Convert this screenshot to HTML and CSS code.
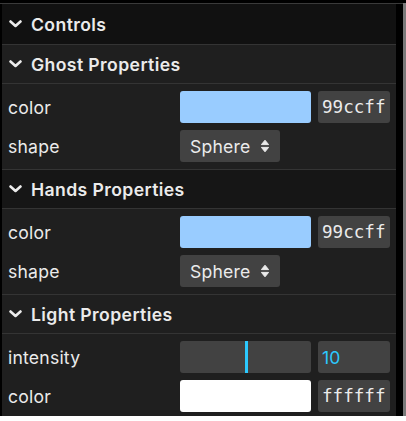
FILE: index.html
```html
<!DOCTYPE html>
<html>
<head>
<meta charset="utf-8">
<link rel="stylesheet" href="styles.css">
</head>
<body>
<div class="screen">
  <div class="window">
    <div class="panel">
      <div class="title root-title">
        <svg class="chev" width="13" height="8" viewBox="0 0 13 8"><polyline points="1.5,1.5 6.5,6 11.5,1.5" fill="none" stroke="#ebebeb" stroke-width="2.6" stroke-linecap="round" stroke-linejoin="round"/></svg>
        <span>Controls</span>
      </div>

      <div class="folder">
        <div class="title">
          <svg class="chev" width="13" height="8" viewBox="0 0 13 8"><polyline points="1.5,1.5 6.5,6 11.5,1.5" fill="none" stroke="#ebebeb" stroke-width="2.6" stroke-linecap="round" stroke-linejoin="round"/></svg>
          <span>Ghost Properties</span>
        </div>
        <div class="children">
          <div class="row">
            <div class="name">color</div>
            <div class="widget">
              <div class="swatch swatch-blue"></div>
              <div class="box mono">99ccff</div>
            </div>
          </div>
          <div class="row">
            <div class="name">shape</div>
            <div class="widget">
              <div class="select">
                <span>Sphere</span>
                <svg width="10" height="14" viewBox="0 0 10 14"><path d="M5 1.2 L8.6 5.6 H1.4 Z" fill="#ebebeb" stroke="#ebebeb" stroke-width="1" stroke-linejoin="round"/><path d="M5 12.8 L8.6 8.4 H1.4 Z" fill="#ebebeb" stroke="#ebebeb" stroke-width="1" stroke-linejoin="round"/></svg>
              </div>
            </div>
          </div>
        </div>
      </div>

      <div class="folder">
        <div class="title title-hover">
          <svg class="chev" width="13" height="8" viewBox="0 0 13 8"><polyline points="1.5,1.5 6.5,6 11.5,1.5" fill="none" stroke="#ebebeb" stroke-width="2.6" stroke-linecap="round" stroke-linejoin="round"/></svg>
          <span>Hands Properties</span>
        </div>
        <div class="children">
          <div class="row">
            <div class="name">color</div>
            <div class="widget">
              <div class="swatch swatch-blue"></div>
              <div class="box mono">99ccff</div>
            </div>
          </div>
          <div class="row">
            <div class="name">shape</div>
            <div class="widget">
              <div class="select">
                <span>Sphere</span>
                <svg width="10" height="14" viewBox="0 0 10 14"><path d="M5 1.2 L8.6 5.6 H1.4 Z" fill="#ebebeb" stroke="#ebebeb" stroke-width="1" stroke-linejoin="round"/><path d="M5 12.8 L8.6 8.4 H1.4 Z" fill="#ebebeb" stroke="#ebebeb" stroke-width="1" stroke-linejoin="round"/></svg>
              </div>
            </div>
          </div>
        </div>
      </div>

      <div class="folder">
        <div class="title">
          <svg class="chev" width="13" height="8" viewBox="0 0 13 8"><polyline points="1.5,1.5 6.5,6 11.5,1.5" fill="none" stroke="#ebebeb" stroke-width="2.6" stroke-linecap="round" stroke-linejoin="round"/></svg>
          <span>Light Properties</span>
        </div>
        <div class="children">
          <div class="row">
            <div class="name">intensity</div>
            <div class="widget">
              <div class="slider"><div class="fill" style="width:68px"></div></div>
              <div class="box number">10</div>
            </div>
          </div>
          <div class="row">
            <div class="name">color</div>
            <div class="widget">
              <div class="swatch swatch-white"></div>
              <div class="box mono">ffffff</div>
            </div>
          </div>
        </div>
      </div>
    </div>
  </div>
  <div class="edge"></div>
</div>
</body>
</html>
```

FILE: styles.css
```css
* { box-sizing: border-box; }

html, body {
  margin: 0;
  padding: 0;
  background: #ffffff;
}

body {
  font-family: Inter, "Liberation Sans", sans-serif;
  font-size: 17.6px;
  letter-spacing: 0.2px;
  color: #ebebeb;
}

.screen {
  width: 406px;
  height: 416px;
  background: #000000;
  padding-top: 3px;
  display: flex;
}

.window {
  width: 403px;
  height: 413px;
  border-top: 1px solid #3a3a3a;
  background: #000000;
  padding-left: 2px;
  display: flex;
  flex-direction: column;
}

.edge {
  width: 3px;
  background: #7a7a7a;
}

.panel {
  width: 394px;
  background: #1f1f1f;
  flex: 1;
}

.title {
  height: 40px;
  display: flex;
  align-items: center;
  padding-left: 7px;
  gap: 9px;
  font-weight: 600;
  letter-spacing: 0.4px;
  background: #1f1f1f;
}

.root-title {
  background: #111111;
}

.title-hover {
  background: #161616;
}

.chev {
  display: block;
  flex: none;
}

.folder {
  border-top: 1px solid #343434;
}

.folder > .title {
  height: 39px;
  border-bottom: 1px solid #343434;
}

.children {
  padding: 7px 0;
  display: flex;
  flex-direction: column;
  gap: 7px;
}

.row {
  height: 32px;
  display: flex;
  align-items: center;
  padding: 0 6px;
}

.name {
  width: 172px;
  flex: none;
}

.widget {
  flex: 1;
  display: flex;
  gap: 7px;
  height: 32px;
}

.swatch {
  width: 131px;
  height: 32px;
  border-radius: 3px;
}

.swatch-blue { background: #99ccff; }
.swatch-white { background: #ffffff; }

.box {
  width: 72px;
  height: 32px;
  border-radius: 3px;
  background: #424242;
  display: flex;
  align-items: center;
  padding-left: 4px;
}

.mono {
  font-family: "DejaVu Sans Mono", "Liberation Mono", monospace;
  font-size: 17.6px;
  letter-spacing: 0;
}

.number {
  color: #2cc9ff;
}

.select {
  width: 100px;
  height: 32px;
  border-radius: 3px;
  background: #424242;
  display: flex;
  align-items: center;
  justify-content: space-between;
  padding: 0 10px;
}

.slider {
  width: 131px;
  height: 32px;
  border-radius: 3px;
  background: #424242;
  overflow: hidden;
}

.fill {
  height: 100%;
  border-right: 3px solid #2cc9ff;
}
```
